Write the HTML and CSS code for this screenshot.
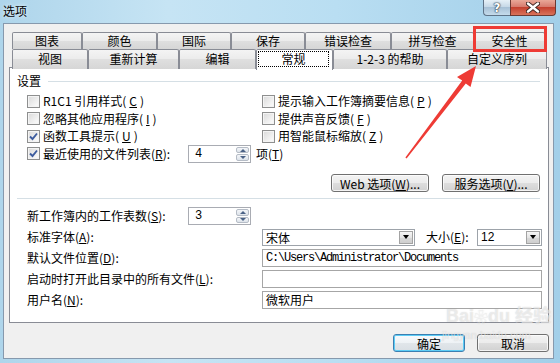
FILE: index.html
```html
<!DOCTYPE html>
<html lang="zh-CN">
<head>
    <meta charset="UTF-8">
    <title>选项</title>
    <link rel="stylesheet" href="styles.css">
</head>
<body>
<div class="window">
    <div class="titlebar">
        <span class="title">选项</span>
        <div class="caption-btns">
            <div class="cap-btn help">?</div>
            <div class="cap-btn close">
                <svg width="14" height="11" viewBox="0 0 14 11">
                    <path d="M2 1.5 L12 9.5 M12 1.5 L2 9.5" stroke="#3b2421" stroke-width="4.2" stroke-linecap="round"/>
                    <path d="M2 1.5 L12 9.5 M12 1.5 L2 9.5" stroke="#fff" stroke-width="2.4" stroke-linecap="round"/>
                </svg>
            </div>
        </div>
    </div>

    <div class="client">
        <div class="tabs">
            <div class="tab-row back">
                <div class="tab">图表</div>
                <div class="tab">颜色</div>
                <div class="tab">国际</div>
                <div class="tab">保存</div>
                <div class="tab">错误检查</div>
                <div class="tab">拼写检查</div>
                <div class="tab">安全性</div>
            </div>
            <div class="tab-row front">
                <div class="tab">视图</div>
                <div class="tab">重新计算</div>
                <div class="tab">编辑</div>
                <div class="tab active"><span class="focus">常规</span></div>
                <div class="tab">1-2-3 的帮助</div>
                <div class="tab">自定义序列</div>
            </div>
        </div>

        <div class="panel">
            <div class="group-title"><span>设置</span><i class="rule"></i></div>

            <div class="checks">
                <div class="check"><span class="box"></span>R1C1 引用样式(<u>C</u>)</div>
                <div class="check"><span class="box"></span>提示输入工作簿摘要信息(<u>P</u>)</div>
                <div class="check"><span class="box"></span>忽略其他应用程序(<u>I</u>)</div>
                <div class="check"><span class="box"></span>提供声音反馈(<u>F</u>)</div>
                <div class="check"><span class="box checked"><svg width="9" height="9" viewBox="0 0 9 9"><path d="M1 4.5 L3.5 7 L8 1.5" fill="none" stroke="#3d5c9e" stroke-width="1.9"/></svg></span>函数工具提示(<u>U</u>)</div>
                <div class="check"><span class="box"></span>用智能鼠标缩放(<u>Z</u>)</div>
                <div class="check wide">
                    <span class="box checked"><svg width="9" height="9" viewBox="0 0 9 9"><path d="M1 4.5 L3.5 7 L8 1.5" fill="none" stroke="#3d5c9e" stroke-width="1.9"/></svg></span>
                    <span class="recent-label">最近使用的文件列表(<u>R</u>):</span>
                    <div class="spin">
                        <span class="spin-value">4</span>
                        <div class="spin-btns"><i class="spin-up"></i><i class="spin-down"></i></div>
                    </div>
                    <span class="unit">项(<u>T</u>)</span>
                </div>
            </div>

            <div class="actions">
                <button class="btn wide">Web 选项(<u>W</u>)...</button>
                <button class="btn wide">服务选项(<u>V</u>)...</button>
            </div>

            <div class="separator"></div>

            <div class="fields">
                <span class="label">新工作簿内的工作表数(<u>S</u>):</span>
                <div class="spin">
                    <span class="spin-value">3</span>
                    <div class="spin-btns"><i class="spin-up"></i><i class="spin-down"></i></div>
                </div>
                <span></span>

                <span class="label span2">标准字体(<u>A</u>):</span>
                <div class="font-row">
                    <div class="select font-select">
                        <span class="select-value">宋体</span>
                        <span class="select-arrow"></span>
                    </div>
                    <span class="size-label">大小(<u>E</u>):</span>
                    <div class="select size-select">
                        <span class="select-value">12</span>
                        <span class="select-arrow"></span>
                    </div>
                </div>

                <span class="label span2">默认文件位置(<u>D</u>):</span>
                <div class="field mono">C:\Users\Administrator\Documents</div>

                <span class="label span2">启动时打开此目录中的所有文件(<u>L</u>):</span>
                <div class="field"></div>

                <span class="label span2">用户名(<u>N</u>):</span>
                <div class="field">微软用户</div>
            </div>
        </div>

        <div class="footer">
            <button class="btn default">确定</button>
            <button class="btn">取消</button>
        </div>
    </div>

    <div class="watermark">
        <span class="wm-big">Bai<b>❀</b>du 经验</span>
        <span class="wm-small">jingyan.baidu.com</span>
    </div>

    <svg class="annotation" width="560" height="363" viewBox="0 0 560 363">
        <rect x="474.5" y="27.5" width="71" height="23" fill="none" stroke="#ee3b35" stroke-width="3"/>
        <polygon points="476,66 470.5,87 465.8,83.4 406.6,158.4 405.4,157.6 462.2,80.6 457,77" fill="#ee3b35"/>
    </svg>
</div>
</body>
</html>
```

FILE: styles.css
```css
* {
    margin: 0;
    padding: 0;
    box-sizing: border-box;
}

body {
    width: 560px;
    height: 363px;
    overflow: hidden;
    font-family: "Noto Sans CJK SC", sans-serif;
    font-size: 12px;
    color: #000;
}

u {
    text-decoration: underline;
    text-underline-offset: 1px;
}

.window {
    position: relative;
    width: 560px;
    height: 363px;
    display: flex;
    flex-direction: column;
    padding: 0 6px 4px 3px;
    background: linear-gradient(90deg, #aed5eb 0%, #c6e4f4 30%, #b9def2 60%, #a2cfe9 100%);
}

/* title bar */
.titlebar {
    height: 23px;
    display: flex;
    justify-content: space-between;
    align-items: flex-start;
}

.title {
    padding-top: 4px;
    line-height: 14px;
    text-shadow: 0 0 4px rgba(255, 255, 255, 0.9);
}

.caption-btns {
    display: flex;
    margin-right: -2px;
}

.cap-btn {
    height: 16px;
    border: 1px solid #5f7387;
    border-top: none;
    display: flex;
    align-items: center;
    justify-content: center;
}

.help {
    width: 27px;
    border-radius: 0 0 0 4px;
    border-right: none;
    background: linear-gradient(#e6f0f7, #c3d6e5 50%, #a8c1d6 50%, #c5dbeb);
    font-family: "DejaVu Sans", sans-serif;
    font-weight: bold;
    font-size: 12px;
    line-height: 14px;
    color: #fff;
    text-shadow: 0 0 1px #2d3a48, 0 0 1px #2d3a48, 0 0 2px #2d3a48;
}

.close {
    width: 46px;
    border-radius: 0 0 4px 0;
    background: linear-gradient(#e9a898, #d5776a 50%, #c4412f 50%, #d9735b);
    border-color: #6b3a33;
}

/* client area */
.client {
    flex: 1;
    background: #f0f0f0;
    border: 1px solid #8699ad;
    padding: 8px 4px 0 5px;
}

.tabs {
    margin-left: 3px;
}

.tab-row {
    display: grid;
}

.back {
    grid-template-columns: 70px 75px 74px 74px 86px 83px 71px;
    height: 17px;
}

.front {
    grid-template-columns: 76px 91px 77px 77px 114px 100px;
    height: 18px;
    align-items: end;
}

.tab {
    height: 100%;
    border: 1px solid #898c95;
    border-bottom: none;
    border-radius: 2px 2px 0 0;
    background: linear-gradient(#f4f4f4, #ebebeb 50%, #dfdfdf 50%, #d6d6d6);
    text-align: center;
    line-height: 16px;
    white-space: nowrap;
}

.front .tab {
    line-height: 17px;
}

.tab.active {
    position: relative;
    z-index: 1;
    height: 21px;
    margin-bottom: -1px;
    background: #fff;
    display: flex;
    padding: 1px 3px 3px 1px;
}

.focus {
    flex: 1;
    border: 1px dotted #000;
    line-height: 14px;
}

/* tab page */
.panel {
    width: 540px;
    height: 256px;
    background: #fff;
    border: 1px solid #898c95;
    padding: 6px 8px 0 7px;
}

.group-title {
    display: flex;
    align-items: center;
    height: 14px;
    line-height: 14px;
}

.rule {
    flex: 1;
    height: 1px;
    margin-left: 7px;
    background: #d5dfe5;
}

.checks {
    display: grid;
    grid-template-columns: 235px 1fr;
    grid-auto-rows: 17.5px;
    margin: 4.5px 0 0 10px;
}

.check {
    display: flex;
    align-items: center;
    gap: 3px;
    line-height: 14px;
    white-space: nowrap;
}

.check.wide {
    grid-column: 1 / -1;
}

.box {
    flex: none;
    width: 13px;
    height: 13px;
    border: 1px solid #8e8f8f;
    background: linear-gradient(135deg, #d9d9d9, #f7f7f7 80%);
    box-shadow: inset 0 0 0 1px #f4f4f4;
    display: flex;
    align-items: center;
    justify-content: center;
}

.recent-label {
    width: 142px;
}

.unit {
    margin-left: 2px;
}

/* spinner */
.spin {
    width: 63px;
    height: 18px;
    border: 1px solid #a9acb3;
    background: #fff;
    display: flex;
}

.spin-value {
    flex: 1;
    padding-left: 6px;
    line-height: 16px;
    font-family: "Liberation Mono", monospace;
}

.spin-btns {
    width: 14px;
    display: flex;
    flex-direction: column;
    gap: 1px;
    padding: 1px 1px 1px 0;
}

.spin-btns i {
    flex: 1;
    border: 1px solid #b5bcc6;
    border-radius: 2px;
    background: linear-gradient(#f4f6f9, #dde3ea);
    display: flex;
    align-items: center;
    justify-content: center;
}

.spin-up::before,
.spin-down::before {
    content: "";
    border-left: 3px solid transparent;
    border-right: 3px solid transparent;
}

.spin-up::before {
    border-bottom: 3px solid #4b6286;
}

.spin-down::before {
    border-top: 3px solid #4b6286;
}

/* buttons */
.actions {
    display: flex;
    justify-content: flex-end;
    gap: 13px;
    margin-top: 11.5px;
}

.btn {
    font: inherit;
    color: #000;
    width: 72px;
    height: 18px;
    line-height: 15px;
    border: 1px solid #707070;
    border-radius: 3px;
    background: linear-gradient(#f3f3f3, #ececec 49%, #dedede 50%, #d1d1d1);
    box-shadow: inset 0 0 0 1px rgba(255, 255, 255, 0.75);
    white-space: nowrap;
}

.btn.wide {
    width: 98px;
}

.btn.default {
    border-color: #3c7fb1;
    background: linear-gradient(#f8fbfd, #eef2f5 49%, #e1e6ea 50%, #d9dfe4);
    box-shadow: inset 0 0 0 1px #5dcdf6;
}

.separator {
    height: 1px;
    margin-top: 6px;
    background: #d5dfe5;
}

/* lower form */
.fields {
    display: grid;
    grid-template-columns: 161px 74px 280px;
    grid-auto-rows: 18px;
    row-gap: 3px;
    align-items: center;
    margin: 8px 0 0 10px;
}

.label {
    line-height: 14px;
    white-space: nowrap;
}

.span2 {
    grid-column: span 2;
}

.font-row {
    display: flex;
    align-items: center;
    height: 18px;
}

.select {
    height: 17px;
    border: 1px solid #9da3aa;
    background: #fff;
    display: flex;
    padding: 1px;
}

.font-select {
    width: 153px;
}

.size-select {
    width: 65px;
    margin-left: auto;
}

.size-label {
    margin-left: 11px;
    line-height: 14px;
}

.select-value {
    flex: 1;
    padding-left: 2px;
    line-height: 13px;
}

.size-select .select-value {
    font-family: "Liberation Sans", sans-serif;
}

.select-arrow {
    width: 14px;
    border: 1px solid #a3a3a3;
    background: linear-gradient(#f6f6f6, #e4e4e4 50%, #d8d8d8 50%, #cfcfcf);
    display: flex;
    align-items: center;
    justify-content: center;
}

.select-arrow::before {
    content: "";
    border-left: 3.5px solid transparent;
    border-right: 3.5px solid transparent;
    border-top: 4px solid #000;
}

.field {
    height: 18px;
    border: 1px solid #a6a6a6;
    background: #fff;
    padding-left: 3px;
    line-height: 16px;
    white-space: nowrap;
}

.mono {
    font-family: "Liberation Mono", monospace;
    letter-spacing: -1.2px;
}

/* footer */
.footer {
    width: 540px;
    display: flex;
    justify-content: flex-end;
    gap: 12px;
    margin-top: 11px;
}

/* overlays */
.watermark {
    position: absolute;
    left: 446px;
    top: 305px;
    display: flex;
    flex-direction: column;
    pointer-events: none;
    color: rgba(255, 255, 255, 0.55);
    text-shadow: 0 0 1px rgba(120, 120, 120, 0.35);
}

.wm-big {
    font-family: "Liberation Sans", "Noto Sans CJK SC", sans-serif;
    font-weight: bold;
    font-size: 18px;
    line-height: 22px;
}

.wm-big b {
    font-size: 14px;
}

.wm-small {
    font-family: "Liberation Sans", sans-serif;
    font-size: 11px;
    line-height: 14px;
    margin-left: -4px;
}

.annotation {
    position: absolute;
    left: 0;
    top: 0;
    pointer-events: none;
}
```
